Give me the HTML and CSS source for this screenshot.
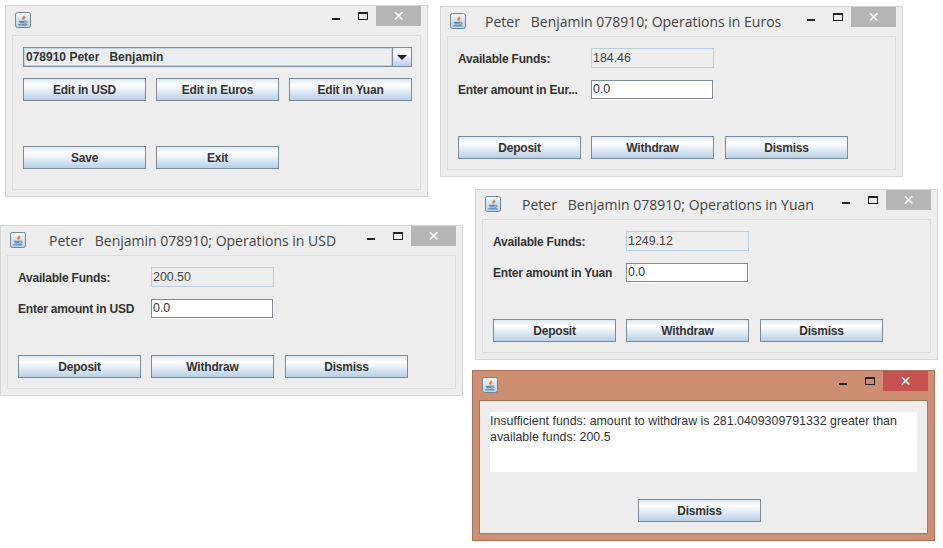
FILE: index.html
```html
<!DOCTYPE html>
<html lang="en">
<head>
    <meta charset="UTF-8" />
    <meta name="viewport" content="width=device-width, initial-scale=1.0" />
    <title>Account windows</title>
    <link rel="stylesheet" href="styles.css">
</head>

<body>
    <svg class="defs" width="0" height="0">
        <defs>
            <linearGradient id="iconBg" x1="0" y1="0" x2="0" y2="1">
                <stop offset="0" stop-color="#f4f7fa" />
                <stop offset="1" stop-color="#b9cfe2" />
            </linearGradient>
            <symbol id="javaIcon" viewBox="0 0 16 16">
                <rect x="0.5" y="0.5" width="15" height="15" rx="2" fill="url(#iconBg)" stroke="#6f8598" />
                <path d="M9 2.5C9.8 4 6.8 5 7.2 6.6c.2.8.8 1.3 1 1.9C8.6 7 10.8 6 9.8 4.6 9.4 4 9.2 3.2 9 2.5z" fill="#d9822b" />
                <path d="M10.8 4.6C11 5.8 9.2 6.4 9.4 7.8" fill="none" stroke="#e0a050" stroke-width="0.8" />
                <path d="M3.8 9.3h6.6M4.6 10.8h5M3.2 12.8h9.2" fill="none" stroke="#3f76ad" stroke-width="1" />
                <path d="M10.4 9.2c2.4-.5 2.6 1.8-.6 2.2" fill="none" stroke="#3f76ad" stroke-width="0.9" />
            </symbol>
        </defs>
    </svg>

    <!-- Main window -->
    <div class="window win-main">
        <div class="titlebar">
            <svg class="app-icon"><use href="#javaIcon" /></svg>
            <span class="win-title"></span>
            <span class="ctl-min"></span>
            <span class="ctl-max"></span>
            <span class="ctl-close">✕</span>
        </div>
        <div class="content">
            <div class="combo">
                <span class="combo-text">078910 Peter   Benjamin</span>
                <span class="combo-arrow"></span>
            </div>
            <div class="btn-row">
                <button class="btn">Edit in USD</button>
                <button class="btn">Edit in Euros</button>
                <button class="btn">Edit in Yuan</button>
            </div>
            <div class="btn-row btn-row-low">
                <button class="btn">Save</button>
                <button class="btn">Exit</button>
            </div>
        </div>
    </div>

    <!-- Euros -->
    <div class="window win-euros">
        <div class="titlebar">
            <svg class="app-icon"><use href="#javaIcon" /></svg>
            <span class="win-title">Peter   Benjamin 078910; Operations in Euros</span>
            <span class="ctl-min"></span>
            <span class="ctl-max"></span>
            <span class="ctl-close">✕</span>
        </div>
        <div class="content ops">
            <div class="field-row">
                <label class="field-label">Available Funds:</label>
                <span class="funds">184.46</span>
            </div>
            <div class="field-row">
                <label class="field-label">Enter amount in Eur...</label>
                <input class="amount" type="text" value="0.0" />
            </div>
            <div class="btn-row">
                <button class="btn">Deposit</button>
                <button class="btn">Withdraw</button>
                <button class="btn">Dismiss</button>
            </div>
        </div>
    </div>

    <!-- Yuan -->
    <div class="window win-yuan">
        <div class="titlebar">
            <svg class="app-icon"><use href="#javaIcon" /></svg>
            <span class="win-title">Peter   Benjamin 078910; Operations in Yuan</span>
            <span class="ctl-min"></span>
            <span class="ctl-max"></span>
            <span class="ctl-close">✕</span>
        </div>
        <div class="content ops">
            <div class="field-row">
                <label class="field-label">Available Funds:</label>
                <span class="funds">1249.12</span>
            </div>
            <div class="field-row">
                <label class="field-label">Enter amount in Yuan</label>
                <input class="amount" type="text" value="0.0" />
            </div>
            <div class="btn-row">
                <button class="btn">Deposit</button>
                <button class="btn">Withdraw</button>
                <button class="btn">Dismiss</button>
            </div>
        </div>
    </div>

    <!-- USD -->
    <div class="window win-usd">
        <div class="titlebar">
            <svg class="app-icon"><use href="#javaIcon" /></svg>
            <span class="win-title">Peter   Benjamin 078910; Operations in USD</span>
            <span class="ctl-min"></span>
            <span class="ctl-max"></span>
            <span class="ctl-close">✕</span>
        </div>
        <div class="content ops">
            <div class="field-row">
                <label class="field-label">Available Funds:</label>
                <span class="funds">200.50</span>
            </div>
            <div class="field-row">
                <label class="field-label">Enter amount in USD</label>
                <input class="amount" type="text" value="0.0" />
            </div>
            <div class="btn-row">
                <button class="btn">Deposit</button>
                <button class="btn">Withdraw</button>
                <button class="btn">Dismiss</button>
            </div>
        </div>
    </div>

    <!-- Error dialog, the focused window -->
    <div class="window win-error">
        <div class="titlebar">
            <svg class="app-icon"><use href="#javaIcon" /></svg>
            <span class="win-title"></span>
            <span class="ctl-min"></span>
            <span class="ctl-max"></span>
            <span class="ctl-close">✕</span>
        </div>
        <div class="content">
            <div class="message">Insufficient funds: amount to withdraw is 281.0409309791332 greater than available funds: 200.5</div>
            <div class="btn-row btn-row-center">
                <button class="btn">Dismiss</button>
            </div>
        </div>
    </div>
</body>
</html>
```

FILE: styles.css
```css
/* Basic reset and background */
body {
    font-family: "Liberation Sans", Arial, sans-serif;
    margin: 0;
    padding: 0;
    background: #fff;
    color: #333;
}

.defs {
    position: absolute;
}

/* Windows sit on a free desktop */
.window {
    position: absolute;
    box-sizing: border-box;
    width: 463px;
    height: 171px;
    display: flex;
    flex-direction: column;
    background: #ededed;
    border: 1px solid #d6d6d6;
}

.win-main {
    left: 5px;
    top: 5px;
    width: 423px;
    height: 192px;
}

.win-euros {
    left: 440px;
    top: 6px;
}

.win-yuan {
    left: 475px;
    top: 189px;
}

.win-usd {
    left: 0;
    top: 225px;
}

.win-error {
    left: 472px;
    top: 370px;
    background: #cd8e71;
    border-color: #a8745c;
}

/* Title bar */
.titlebar {
    height: 29px;
    flex: none;
    display: flex;
    align-items: flex-start;
}

.app-icon {
    width: 16px;
    height: 16px;
    margin: 6px 0 0 9px;
    flex: none;
}

.win-title {
    flex: 1;
    margin: 5px 0 0 19px;
    font-family: "Open Sans", sans-serif;
    font-size: 14px;
    line-height: 20px;
    color: #444;
    white-space: pre;
}

.win-yuan .win-title {
    margin-left: 21px;
}

.win-usd .win-title {
    margin-left: 23px;
}

.ctl-min {
    width: 8px;
    height: 2px;
    margin: 12px 18px 0 0;
    background: #222;
    flex: none;
}

.ctl-max {
    box-sizing: border-box;
    width: 10px;
    height: 8px;
    margin: 6px 8px 0 0;
    border: 1px solid #222;
    border-top-width: 2px;
    flex: none;
}

.ctl-close {
    width: 45px;
    height: 20px;
    margin-right: 6px;
    flex: none;
    background: #b5b5b5;
    color: #fff;
    font-family: "DejaVu Sans", sans-serif;
    font-size: 14px;
    line-height: 20px;
    text-align: center;
}

.win-error .ctl-close {
    background: #c75050;
}

/* Panel under the title bar */
.content {
    flex: 1;
    box-sizing: border-box;
    margin: 0 6px 6px;
    padding: 11px 8px 0 10px;
    background: #ededed;
    border: 1px solid #dcdcdc;
}

.win-error .content {
    padding-right: 10px;
    border-color: #a8745c;
}

/* Combo box */
.combo {
    box-sizing: border-box;
    height: 20px;
    display: flex;
    border: 1px solid #7a8a99;
    background: #ebeef1;
}

.combo-text {
    flex: 1;
    padding-left: 2px;
    font-size: 12px;
    font-weight: bold;
    line-height: 18px;
    white-space: pre;
    box-shadow: inset 0 0 0 1px #c4d4e4;
}

.combo-arrow {
    width: 18px;
    position: relative;
    border-left: 1px solid #7a8a99;
    background: linear-gradient(#e6eef6, #ffffff 30%, #b8cfe5);
}

.combo-arrow::after {
    content: "";
    position: absolute;
    left: 4px;
    top: 7px;
    border-left: 5px solid transparent;
    border-right: 5px solid transparent;
    border-top: 5px solid #222;
}

/* Buttons */
.btn-row {
    display: flex;
    gap: 10px;
    margin-top: 11px;
}

.btn-row-low {
    margin-top: 45px;
}

.btn-row-center {
    justify-content: center;
    margin-top: 27px;
    padding-right: 8px;
}

.btn {
    box-sizing: border-box;
    width: 123px;
    height: 23px;
    flex: none;
    padding: 0;
    font-family: "Liberation Sans", Arial, sans-serif;
    font-size: 12px;
    font-weight: bold;
    letter-spacing: -0.2px;
    color: #333;
    border: 1px solid #7a8a99;
    background: linear-gradient(#dde8f3, #ffffff 28%, #b8cfe5);
}

/* Operation windows */
.field-row {
    display: flex;
    align-items: center;
    height: 20px;
    margin-bottom: 11px;
}

.field-label {
    width: 133px;
    flex: none;
    padding-top: 1px;
    font-size: 12px;
    font-weight: bold;
    letter-spacing: -0.2px;
}

.funds {
    box-sizing: border-box;
    width: 123px;
    height: 20px;
    padding-left: 1px;
    font-size: 12.4px;
    line-height: 18px;
    color: #444;
    border: 1px solid #b8cfe5;
}

.amount {
    box-sizing: border-box;
    width: 122px;
    height: 19px;
    padding: 0 0 0 1px;
    font-family: "Liberation Sans", Arial, sans-serif;
    font-size: 12.4px;
    color: #333;
    background: #fff;
    border: 1px solid #7a8a99;
    box-shadow: 1px 1px 0 #fff;
}

.ops .btn-row {
    margin-top: 37px;
}

.ops .btn:last-child {
    margin-left: 1px;
}

/* Error message */
.message {
    height: 60px;
    box-sizing: border-box;
    padding: 1px 0 0;
    background: #fff;
    font-size: 12.4px;
    line-height: 16px;
    color: #333;
}
```
